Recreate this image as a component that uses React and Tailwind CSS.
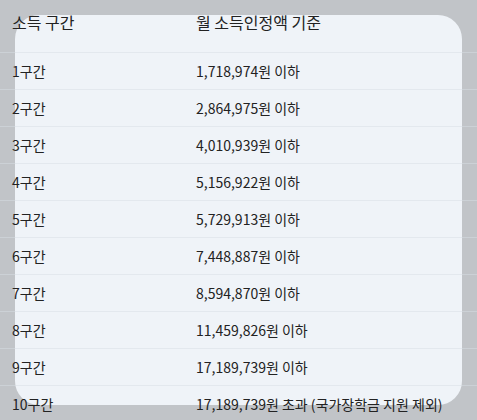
import React from 'react';

const rows = [
  ['1구간', '1,718,974원 이하'],
  ['2구간', '2,864,975원 이하'],
  ['3구간', '4,010,939원 이하'],
  ['4구간', '5,156,922원 이하'],
  ['5구간', '5,729,913원 이하'],
  ['6구간', '7,448,887원 이하'],
  ['7구간', '8,594,870원 이하'],
  ['8구간', '11,459,826원 이하'],
  ['9구간', '17,189,739원 이하'],
  ['10구간', '17,189,739원 초과 (국가장학금 지원 제외)'],
];

export default function App() {
  return (
    <div
      className="w-[477px] h-[420px] overflow-hidden bg-[#c1c4c8] pt-[15px] px-[15px] text-[#222]"
      style={{ fontFamily: '"Noto Sans CJK KR", "Noto Sans", sans-serif' }}
    >
      <div className="flex h-[390px] flex-col rounded-[24px] bg-[#eff3f8]">
        <div className="-mx-[15px] -mt-[15px] w-[477px]">
          <div className="flex h-[53px] border-b border-[#d8dde4]/50 pt-[10px] text-[16px] leading-[24px]">
            <div className="w-[184px] pl-3">소득 구간</div>
            <div className="flex-1 pl-3">월 소득인정액 기준</div>
          </div>
          {rows.map(([band, amount]) => (
            <div
              key={band}
              className="flex h-[37px] items-center border-b border-[#d8dde4]/50 text-[14px]"
            >
              <div className="w-[184px] pl-3">{band}</div>
              <div className="flex-1 pl-3">{amount}</div>
            </div>
          ))}
        </div>
      </div>
    </div>
  );
}
